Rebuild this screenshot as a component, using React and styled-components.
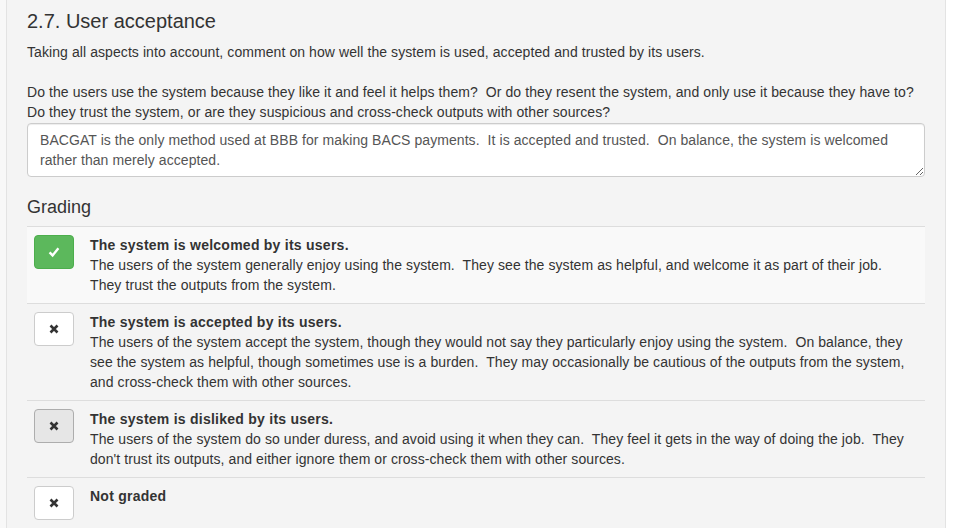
import React from 'react';
import styled, { createGlobalStyle } from 'styled-components';

const GlobalStyle = createGlobalStyle`
	html, body {
		margin: 0;
		padding: 0;
		background: #fff;
	}
	body {
		font-family: "Liberation Sans", Arial, sans-serif;
		font-size: 14px;
		line-height: 20px;
		letter-spacing: 0.08px;
		color: #333;
	}
`;

const Page = styled.div`
	width: 953px;
	height: 528px;
	overflow: hidden;
	padding-left: 6px;
	box-sizing: border-box;
	background: linear-gradient(to right, #f8f8f8 0, #f8f8f8 6px, #fff 6px);
`;

const Panel = styled.div`
	width: 940px;
	box-sizing: border-box;
	background: #f4f4f4;
	border-left: 1px solid #e3e3e3;
	border-right: 1px solid #e3e3e3;
	padding: 10px 20px 0 20px;
	min-height: 528px;
`;

const Heading = styled.h3`
	margin: 0;
	font-size: ${({ size }) => size || 20}px;
	line-height: 22px;
	font-weight: 500;
	letter-spacing: 0;
	color: #333;
	margin-top: ${({ top }) => top || 0}px;
	margin-bottom: ${({ bottom }) => bottom || 0}px;
`;

const Text = styled.p`
	margin: 0;
	white-space: pre-wrap;
	margin-top: ${({ top }) => top || 0}px;
`;

const Comment = styled.textarea`
	display: block;
	width: 100%;
	box-sizing: border-box;
	margin-top: 1px;
	height: 54px;
	padding: 6px 12px;
	font-family: "Liberation Sans", Arial, sans-serif;
	font-size: 14px;
	line-height: 20px;
	letter-spacing: 0.07px;
	color: #555;
	background: #fff;
	border: 1px solid #ccc;
	border-radius: 4px;
	box-shadow: inset 0 1px 1px rgba(0, 0, 0, 0.075);
	resize: vertical;
	overflow: hidden;
	outline: none;
`;

const Grades = styled.div`
	display: flex;
	flex-direction: column;
`;

const GradeRow = styled.div`
	display: flex;
	align-items: flex-start;
	border-top: 1px solid #ddd;
	background: ${({ striped }) => (striped ? '#f9f9f9' : 'transparent')};
`;

const ButtonCell = styled.div`
	padding: 8px 8px 8px 7px;
	flex: none;
`;

const GradeButton = styled.button`
	width: 40px;
	height: 34px;
	display: flex;
	align-items: center;
	justify-content: center;
	padding: 0;
	border-radius: 4px;
	border: 1px solid
		${({ state }) =>
			state === 'selected' ? '#4cae4c' : state === 'active' ? '#adadad' : '#ccc'};
	background: ${({ state }) =>
		state === 'selected' ? '#5cb85c' : state === 'active' ? '#e6e6e6' : '#fff'};
	color: ${({ state }) => (state === 'selected' ? '#fff' : '#333')};
	cursor: pointer;
	& > svg {
		display: block;
	}
`;

const TextCell = styled.div`
	flex: 1;
	padding: 8px;
	min-width: 0;
`;

const Title = styled.div`
	font-weight: bold;
	letter-spacing: 0.25px;
	color: #333;
`;

const Description = styled.div`
	white-space: pre-wrap;
	color: #333;
`;

const CheckIcon = () => (
	<svg width="12" height="12" viewBox="0 0 12 12">
		<path d="M1.6 6.4 L4.6 9.4 L10.4 2.2" fill="none" stroke="currentColor" strokeWidth="2.4" />
	</svg>
);

const CrossIcon = () => (
	<svg width="10" height="10" viewBox="0 0 10 10">
		<path d="M1.5 1.5 L8.5 8.5 M8.5 1.5 L1.5 8.5" fill="none" stroke="currentColor" strokeWidth="2.6" />
	</svg>
);

const grades = [
	{
		state: 'selected',
		title: 'The system is welcomed by its users.',
		text: 'The users of the system generally enjoy using the system.  They see the system as helpful, and welcome it as part of their job.\nThey trust the outputs from the system.',
	},
	{
		state: 'default',
		title: 'The system is accepted by its users.',
		text: 'The users of the system accept the system, though they would not say they particularly enjoy using the system.  On balance, they see the system as helpful, though sometimes use is a burden.  They may occasionally be cautious of the outputs from the system, and cross-check them with other sources.',
	},
	{
		state: 'active',
		title: 'The system is disliked by its users.',
		text: "The users of the system do so under duress, and avoid using it when they can.  They feel it gets in the way of doing the job.  They don't trust its outputs, and either ignore them or cross-check them with other sources.",
	},
	{
		state: 'default',
		title: 'Not graded',
		text: '',
	},
];

export default function App() {
	return (
		<Page>
			<GlobalStyle />
			<Panel>
				<Heading>2.7. User acceptance</Heading>
				<Text top={10}>
					Taking all aspects into account, comment on how well the system is used, accepted and trusted by its users.
				</Text>
				<Text top={20}>
					{'Do the users use the system because they like it and feel it helps them?  Or do they resent the system, and only use it because they have to?  Do they trust the system, or are they suspicious and cross-check outputs with other sources?'}
				</Text>
				<Comment
					rows={2}
					defaultValue="BACGAT is the only method used at BBB for making BACS payments.  It is accepted and trusted.  On balance, the system is welcomed rather than merely accepted."
				/>
				<Heading size={18} top={19} bottom={8}>
					Grading
				</Heading>
				<Grades>
					{grades.map((g, i) => (
						<GradeRow key={i} striped={i === 0}>
							<ButtonCell>
								<GradeButton state={g.state}>
									{g.state === 'selected' ? <CheckIcon /> : <CrossIcon />}
								</GradeButton>
							</ButtonCell>
							<TextCell>
								<Title>{g.title}</Title>
								{g.text && <Description>{g.text}</Description>}
							</TextCell>
						</GradeRow>
					))}
				</Grades>
			</Panel>
		</Page>
	);
}
